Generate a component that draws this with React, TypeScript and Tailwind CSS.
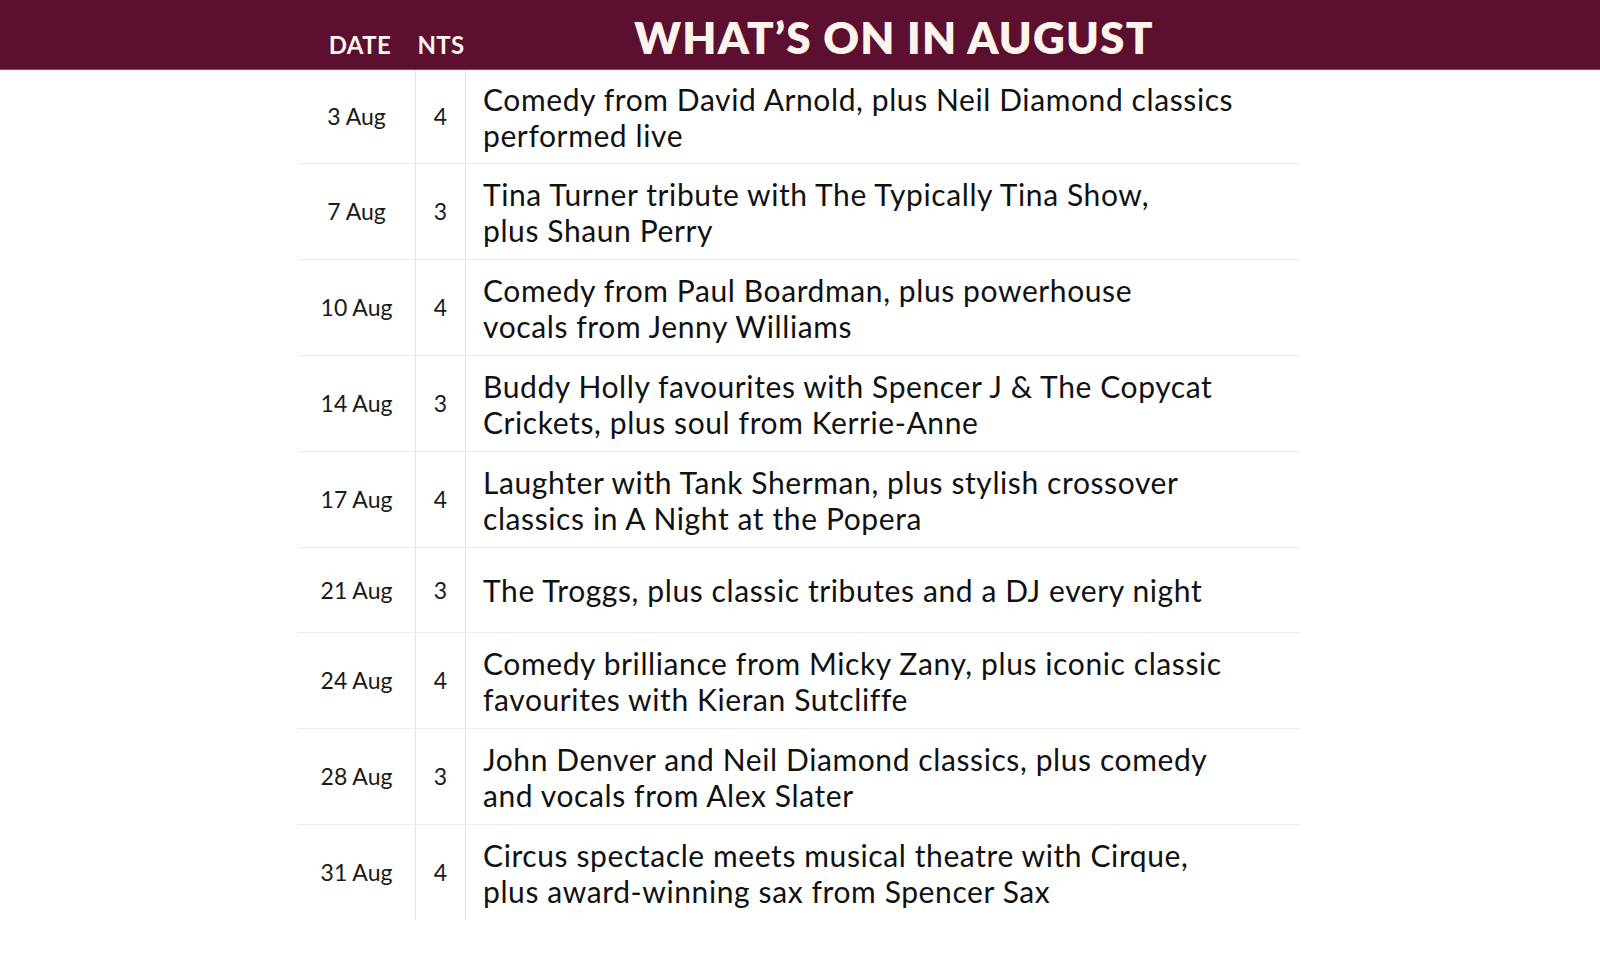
import React from "react";

const rows: { date: string; nts: string; lines: string[]; h: string }[] = [
  { date: "3 Aug", nts: "4", lines: ["Comedy from David Arnold, plus Neil Diamond classics", "performed live"], h: "h-[94px]" },
  { date: "7 Aug", nts: "3", lines: ["Tina Turner tribute with The Typically Tina Show,", "plus Shaun Perry"], h: "h-[96px]" },
  { date: "10 Aug", nts: "4", lines: ["Comedy from Paul Boardman, plus powerhouse", "vocals from Jenny Williams"], h: "h-[96px]" },
  { date: "14 Aug", nts: "3", lines: ["Buddy Holly favourites with Spencer J & The Copycat", "Crickets, plus soul from Kerrie-Anne"], h: "h-[96px]" },
  { date: "17 Aug", nts: "4", lines: ["Laughter with Tank Sherman, plus stylish crossover", "classics in A Night at the Popera"], h: "h-[96px]" },
  { date: "21 Aug", nts: "3", lines: ["The Troggs, plus classic tributes and a DJ every night"], h: "h-[85px]" },
  { date: "24 Aug", nts: "4", lines: ["Comedy brilliance from Micky Zany, plus iconic classic", "favourites with Kieran Sutcliffe"], h: "h-[96px]" },
  { date: "28 Aug", nts: "3", lines: ["John Denver and Neil Diamond classics, plus comedy", "and vocals from Alex Slater"], h: "h-[96px]" },
  { date: "31 Aug", nts: "4", lines: ["Circus spectacle meets musical theatre with Cirque,", "plus award-winning sax from Spencer Sax"], h: "h-[95px]" },
];

export default function App() {
  return (
    <div className="w-[1600px] h-[967px] bg-white overflow-hidden" style={{ fontFamily: "Lato, 'Noto Sans', sans-serif" }}>
      <div className="h-[70px] bg-[#5c0f2e] border-b border-[#8a4764] flex">
        <div className="ml-[298px] flex w-[1002px]">
          <div className="w-[118px] flex items-center justify-center pl-[6px] pt-[21px] text-[24px] font-bold text-[#fdf4ec] tracking-[0.4px]">DATE</div>
          <div className="w-[50px] flex items-center justify-center pt-[21px] text-[24px] font-bold text-[#fdf4ec] tracking-[0.3px]">NTS</div>
          <div className="flex-1 flex items-center justify-center pl-[22px] pt-[4px] text-[44px] font-extrabold text-[#fdf4ec] tracking-[1.2px]">
            WHAT’S ON IN AUGUST
          </div>
        </div>
      </div>
      <div className="ml-[298px] w-[1002px]">
        {rows.map((r, i) => (
          <div key={i} className={`flex ${r.h} ${i < rows.length - 1 ? "border-b border-[#ebebeb]" : ""}`}>
            <div className="w-[118px] flex items-center justify-center text-[23px] text-[#1a1a1a] border-r border-[#e3e3e3]">{r.date}</div>
            <div className="w-[50px] flex items-center justify-center text-[23px] text-[#1a1a1a] border-r border-[#e3e3e3]">{r.nts}</div>
            <div className="flex-1 flex flex-col justify-center pl-[17px] text-[30px] leading-[36px] tracking-[0.6px] text-[#111111]">
              {r.lines.map((l, j) => (
                <div key={j} className="whitespace-nowrap">{l}</div>
              ))}
            </div>
          </div>
        ))}
      </div>
    </div>
  );
}
